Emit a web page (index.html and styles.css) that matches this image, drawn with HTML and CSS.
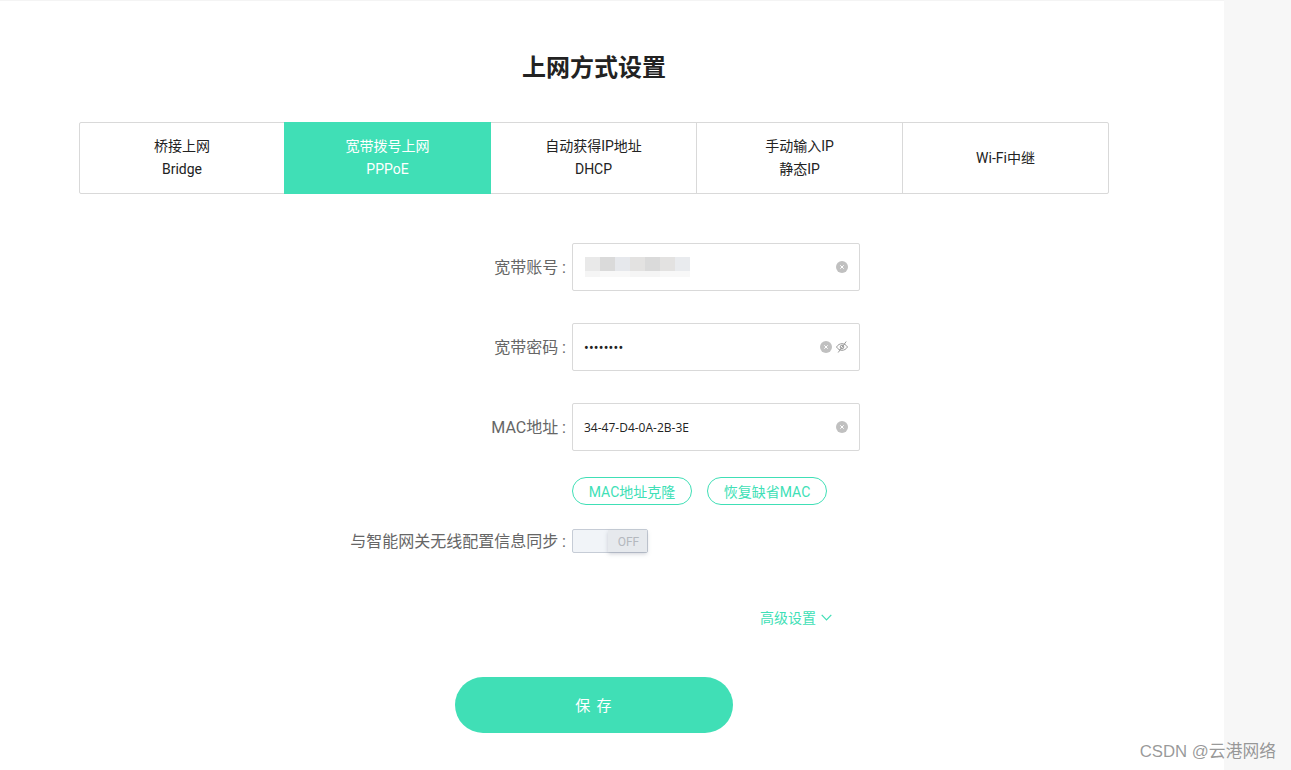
FILE: index.html
```html
<!DOCTYPE html>
<html lang="zh-CN">
<head>
<meta charset="utf-8">
<title>上网方式设置</title>
<link rel="stylesheet" href="styles.css">
</head>
<body>
<main class="page">
  <h1 class="title">上网方式设置</h1>
  <div class="tabs">
    <div class="tab"><span>桥接上网</span><span>Bridge</span></div>
    <div class="tab active"><span>宽带拨号上网</span><span>PPPoE</span></div>
    <div class="tab plain"><span>自动获得IP地址</span><span>DHCP</span></div>
    <div class="tab"><span>手动输入IP</span><span>静态IP</span></div>
    <div class="tab"><span>Wi-Fi中继</span></div>
  </div>
  <form class="form">
    <div class="row">
      <div class="label">宽带账号 :</div>
      <div class="field">
        <div class="mosaic">
          <div class="mosaic-row"><i class="m1"></i><i class="m2"></i><i class="m3"></i><i class="m4"></i><i class="m2"></i><i class="m4"></i><i class="m5"></i></div>
          <div class="mosaic-row low"><i class="m6"></i><i class="m7"></i><i class="m7"></i><i class="m6"></i><i class="m6"></i><i class="m7"></i><i class="m7"></i></div>
        </div>
        <svg class="clear" viewBox="0 0 12 12"><circle cx="6" cy="6" r="6" fill="#c0c0c0"/><path d="M4.300 4.300l3.400 3.400M7.700 4.300l-3.400 3.400" stroke="#fff" stroke-width="1" fill="none"/></svg>
      </div>
    </div>
    <div class="row">
      <div class="label">宽带密码 :</div>
      <div class="field">
        <span class="dots">••••••••</span>
        <svg class="clear" viewBox="0 0 12 12"><circle cx="6" cy="6" r="6" fill="#c0c0c0"/><path d="M4.300 4.300l3.400 3.400M7.700 4.300l-3.400 3.400" stroke="#fff" stroke-width="1" fill="none"/></svg>
        <svg class="eye" viewBox="0 0 12 12"><path d="M.5 6C2 3.700 3.900 2.700 6 2.700S10 3.700 11.500 6C10 8.300 8.100 9.300 6 9.300S2 8.300.5 6Z" fill="none" stroke="#999" stroke-width="1"/><circle cx="6" cy="6" r="1.800" fill="none" stroke="#999" stroke-width="1"/><path d="M2.200 11.500 10.200.5" stroke="#999" stroke-width="1" fill="none"/></svg>
      </div>
    </div>
    <div class="row">
      <div class="label">MAC地址 :</div>
      <div class="field">
        <span class="value">34-47-D4-0A-2B-3E</span>
        <svg class="clear" viewBox="0 0 12 12"><circle cx="6" cy="6" r="6" fill="#c0c0c0"/><path d="M4.300 4.300l3.400 3.400M7.700 4.300l-3.400 3.400" stroke="#fff" stroke-width="1" fill="none"/></svg>
      </div>
    </div>
    <div class="mac-actions">
      <button type="button" class="pill">MAC地址克隆</button>
      <button type="button" class="pill">恢复缺省MAC</button>
    </div>
    <div class="row sync">
      <div class="label">与智能网关无线配置信息同步 :</div>
      <div class="switch"><span class="knob">OFF</span></div>
    </div>
    <div class="advanced">
      <span>高级设置</span>
      <svg class="chevron" viewBox="0 0 11 7"><path d="M.7.8 5.500 5.800 10.300.8" fill="none" stroke="#40dfb6" stroke-width="1.200"/></svg>
    </div>
    <button type="button" class="save">保 存</button>
  </form>
</main>
<aside class="side"></aside>
<div class="watermark">CSDN @云港网络</div>
</body>
</html>
```
FILE: styles.css
```css
* { box-sizing: border-box; }
html, body { margin: 0; height: 100%; }
body {
  display: flex;
  height: 770px;
  overflow: hidden;
  background: #fff;
  font-family: Roboto, "Noto Sans CJK SC", sans-serif;
  color: #222;
  font-size: 14px;
}
.page {
  width: 1224px;
  flex: none;
  padding: 0 115px 0 79px;
  border-top: 1px solid #f4f4f4;
  display: flex;
  flex-direction: column;
}
.side { flex: 1; background: #f7f7f7; }
.title {
  margin: 47px 0 0;
  height: 36px;
  line-height: 36px;
  text-align: center;
  font-size: 24px;
  font-weight: 700;
  color: #222;
  font-family: "Noto Sans CJK SC", sans-serif;
}
.tabs {
  margin-top: 38px;
  height: 72px;
  display: grid;
  grid-template-columns: 204px 207px 205px 206px 206px;
  border: 1px solid #d9d9d9;
  border-radius: 2px;
}
.tab {
  display: flex;
  flex-direction: column;
  justify-content: center;
  align-items: center;
  border-left: 1px solid #d9d9d9;
  line-height: 23px;
  font-size: 14px;
  color: #222;
}
.tab:first-child,
.tab.plain { border-left: 0; }
.tab.active {
  background: #40dfb6;
  color: #fff;
  border-left: 0;
  margin: -1px 0;
}
.form {
  display: flex;
  flex-direction: column;
  padding-top: 49px;
}
.row {
  display: flex;
  align-items: center;
  margin-bottom: 32px;
  height: 48px;
}
.label {
  width: 493px;
  padding: 0 6px 2px 0;
  text-align: right;
  font-size: 16px;
  color: #666;
}
.field {
  width: 288px;
  height: 48px;
  border: 1px solid #d9d9d9;
  border-radius: 2px;
  display: flex;
  align-items: center;
  padding: 0 11px 0 12px;
  gap: 4px;
}
.value {
  font-family: "Open Sans", sans-serif;
  font-size: 12px;
  color: #222;
  margin: 0 auto 0 -1px;
}
.dots {
  font-size: 14px;
  color: #222;
  margin: 2px auto 0 -1px;
  letter-spacing: .2px;
}
.mosaic { margin-right: auto; }
.mosaic-row { display: flex; height: 14px; }
.mosaic-row.low { height: 6px; }
.mosaic i { display: block; width: 15px; }
.m1 { background: #e9e9e9; }
.m2 { background: #dadada; }
.m3 { background: #e6e8ec; }
.m4 { background: #e3e2e1; }
.m5 { background: #e9ebee; }
.m6 { background: #f5f5f5; }
.m7 { background: #f8f8f8; }
.clear { width: 12px; height: 12px; flex: none; }
.eye { width: 12px; height: 12px; flex: none; }
.mac-actions {
  display: flex;
  gap: 15px;
  margin-left: 493px;
  margin-top: -6px;
}
.pill {
  width: 120px;
  height: 28px;
  padding: 0;
  background: #fff;
  border: 1px solid #40dfb6;
  border-radius: 14px;
  color: #40dfb6;
  font: inherit;
  font-size: 14px;
}
.row.sync { height: 24px; margin: 24px 0 0; }
.switch {
  width: 76px;
  height: 24px;
  border: 1px solid #c6ccd6;
  border-radius: 2px;
  background: #f1f4f8;
  display: flex;
  justify-content: flex-end;
}
.knob {
  width: 39px;
  padding-left: 2px;
  background: #e6e9ed;
  box-shadow: 0 2px 4px rgba(120, 130, 145, .35);
  color: #b4b8be;
  font-size: 12px;
  line-height: 24px;
  text-align: center;
}
.advanced {
  margin: 54px 0 0 681px;
  width: 80px;
  display: flex;
  align-items: center;
  gap: 5px;
  color: #40dfb6;
  font-size: 14px;
  height: 20px;
}
.chevron { flex: none; width: 11px; height: 7px; }
.save {
  margin: 50px 0 0 376px;
  width: 278px;
  height: 56px;
  padding: 0 0 2px;
  border: 0;
  border-radius: 28px;
  background: #40dfb6;
  color: #fff;
  font: inherit;
  font-size: 15px;
  letter-spacing: 1.2px;
}
.watermark {
  position: absolute;
  right: 15px;
  bottom: 8px;
  color: rgba(120, 120, 120, .75);
  font-family: "Liberation Sans", "Noto Sans CJK SC", sans-serif;
  font-size: 16.8px;
}
```
